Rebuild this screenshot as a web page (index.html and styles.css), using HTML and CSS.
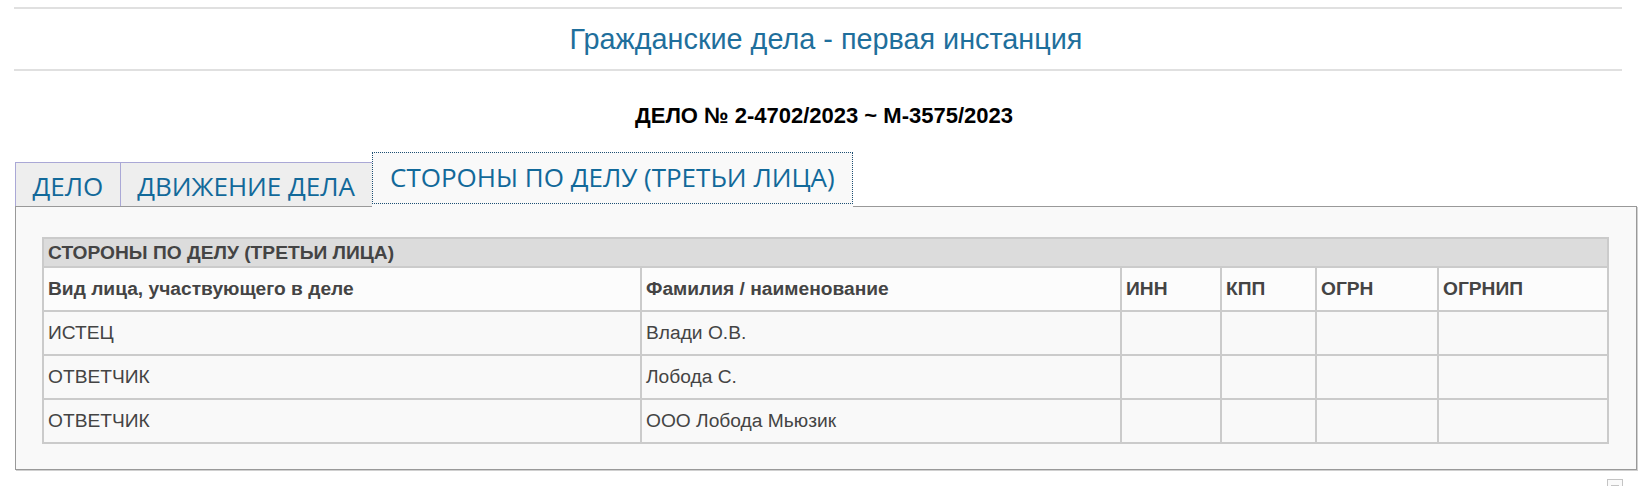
FILE: index.html
```html
<!DOCTYPE html>
<html lang="ru">
<head>
<meta charset="utf-8">
<title>Гражданские дела - первая инстанция</title>
<link rel="stylesheet" href="styles.css">
</head>
<body>
<div class="page">
  <header class="hdr">
    <h1 class="title">Гражданские дела - первая инстанция</h1>
  </header>
  <div class="case-no">ДЕЛО № 2-4702/2023 ~ М-3575/2023</div>
  <div class="tabs">
    <div class="tab">ДЕЛО</div>
    <div class="tab">ДВИЖЕНИЕ ДЕЛА</div>
    <div class="tab active">СТОРОНЫ ПО ДЕЛУ (ТРЕТЬИ ЛИЦА)</div>
  </div>
  <div class="panel">
    <table class="grid">
      <colgroup>
        <col class="c1"><col class="c2"><col class="c3"><col class="c4"><col class="c5"><col class="c6">
      </colgroup>
      <tr class="caption-row"><th colspan="6">СТОРОНЫ ПО ДЕЛУ (ТРЕТЬИ ЛИЦА)</th></tr>
      <tr class="head-row">
        <th>Вид лица, участвующего в деле</th>
        <th>Фамилия / наименование</th>
        <th>ИНН</th>
        <th>КПП</th>
        <th>ОГРН</th>
        <th>ОГРНИП</th>
      </tr>
      <tr><td>ИСТЕЦ</td><td>Влади О.В.</td><td></td><td></td><td></td><td></td></tr>
      <tr><td>ОТВЕТЧИК</td><td>Лобода С.</td><td></td><td></td><td></td><td></td></tr>
      <tr><td>ОТВЕТЧИК</td><td>ООО Лобода Мьюзик</td><td></td><td></td><td></td><td></td></tr>
    </table>
  </div>
  <div class="foot">
    <svg class="foot-icon" width="16" height="14" viewBox="0 0 16 14">
      <rect x="0.5" y="0.5" width="15" height="13" fill="#fafafa" stroke="#c4c4c4"/>
      <line x1="4" y1="6.5" x2="12" y2="6.5" stroke="#c4c4c4"/>
    </svg>
  </div>
</div>
</body>
</html>
```

FILE: styles.css
```css
html, body {
  margin: 0;
  padding: 0;
  background: #fff;
}

body {
  font-family: "Liberation Sans", Arial, sans-serif;
  color: #000;
}

.page {
  width: 1648px;
  height: 486px;
  overflow: hidden;
}

.hdr {
  margin: 7px 26px 0 14px;
  height: 60px;
  border-top: 2px solid #e0e0e0;
  border-bottom: 2px solid #e0e0e0;
  display: flex;
  align-items: center;
  justify-content: center;
  padding-left: 16px;
}

.title {
  margin: 0;
  font-weight: normal;
  font-size: 28.8px;
  line-height: 1;
  color: #1f6f9c;
}

.case-no {
  margin-top: 32px;
  text-align: center;
  font-weight: bold;
  font-size: 22px;
  line-height: 26px;
  color: #000;
}

.tabs {
  display: flex;
  align-items: flex-end;
  height: 54px;
  margin: 23px 0 0 15px;
}

.tab {
  box-sizing: border-box;
  height: 44px;
  padding: 4px 16.5px 0;
  border: 1px solid #aaa8d6;
  border-bottom: none;
  background: #eeeeee;
  font-family: "Open Sans", "Noto Sans", sans-serif;
  font-size: 26px;
  line-height: 38px;
  color: #12699a;
  white-space: nowrap;
}

.tab + .tab {
  margin-left: -1px;
}

.tab.active {
  position: relative;
  height: 52px;
  margin-bottom: 2px;
  padding: 4px 17.5px 6px;
  line-height: 40px;
  border: 1px dotted #1d4f73;
  background: #f9f9f9;
}

.tab.active::after {
  content: "";
  position: absolute;
  left: -1px;
  right: -1px;
  bottom: -5px;
  height: 4px;
  background: #f9f9f9;
}

.panel {
  margin: 0 11px 0 15px;
  padding: 30px 27px 25px 26px;
  border: 1px solid #999;
  box-shadow: 1px 1px 0 #d0d0d0;
  background: #f9f9f9;
}

.grid {
  width: 100%;
  table-layout: fixed;
  border-collapse: separate;
  border-spacing: 0;
  border: 1px solid #cbcbcb;
  font-size: 19.2px;
  color: #444;
}

.grid .c1 { width: 598px; }
.grid .c2 { width: 480px; }
.grid .c3 { width: 100px; }
.grid .c4 { width: 95px; }
.grid .c5 { width: 122px; }

.grid th,
.grid td {
  border: 1px solid #cbcbcb;
  padding: 0 4px;
  text-align: left;
  vertical-align: middle;
  white-space: nowrap;
  overflow: hidden;
}

.caption-row th {
  background: #dcdcdc;
  line-height: 27px;
  font-weight: bold;
}

.head-row th {
  background: #fcfcfc;
  line-height: 42px;
  font-weight: bold;
}

.grid td {
  line-height: 42px;
  background: #f9f9f9;
}

.foot {
  display: flex;
  justify-content: flex-end;
  margin: 9px 25px 0 0;
}

.foot-icon {
  display: block;
}
```
